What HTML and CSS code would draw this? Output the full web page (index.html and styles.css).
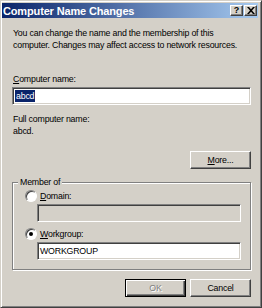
FILE: index.html
```html
<!DOCTYPE html>
<html>
<head>
<meta charset="utf-8">
<link rel="stylesheet" href="styles.css">
</head>
<body>
<div class="window">
  <div class="titlebar">
    <span class="title">Computer Name Changes</span>
    <div class="caption-buttons">
      <span class="cbtn help">?</span>
      <span class="cbtn close"><svg width="8" height="7" viewBox="0 0 8 7"><path d="M0 0h2l2 2.2L6 0h2L5 3.5 8 7H6L4 4.8 2 7H0l3-3.5z" fill="#000"/></svg></span>
    </div>
  </div>
  <div class="content">
    <p class="desc">You can change the name and the membership of this<br>computer. Changes may affect access to network resources.</p>
    <div class="label top-label"><u>C</u>omputer name:</div>
    <div class="field"><span class="sel">abcd</span></div>
    <div class="label full-label">Full computer name:</div>
    <div class="label">abcd.</div>
    <div class="more-row"><button class="btn"><u>M</u>ore...</button></div>
    <fieldset class="group">
      <legend>Member of</legend>
      <div class="group-body">
        <div class="radio-row">
          <span class="radio"></span><span class="rlabel"><u>D</u>omain:</span>
        </div>
        <div class="field indent disabled"></div>
        <div class="radio-row second">
          <span class="radio checked"></span><span class="rlabel"><u>W</u>orkgroup:</span>
        </div>
        <div class="field indent">WORKGROUP</div>
      </div>
    </fieldset>
    <div class="actions">
      <button class="btn default" disabled><span class="dis">OK</span></button>
      <button class="btn">Cancel</button>
    </div>
  </div>
</div>
</body>
</html>
```
FILE: styles.css
```css
html, body {
  margin: 0;
  padding: 0;
  background: #d4d0c8;
}
body {
  font-family: "Liberation Sans", Arial, sans-serif;
  font-size: 8.8px;
  letter-spacing: -0.2px;
  color: #000;
}
.window {
  width: 262px;
  height: 308px;
  box-sizing: border-box;
  background: #d4d0c8;
  border: 1px solid;
  border-color: #d4d0c8 #404040 #404040 #d4d0c8;
  box-shadow: inset 1px 1px #fff, inset -1px -1px #808080;
  padding: 2px 3px 3px 1px;
  display: flex;
  flex-direction: column;
}
.titlebar {
  height: 15px;
  flex: none;
  background: linear-gradient(to right, #0a246a, #a6caf0);
  display: flex;
  align-items: center;
  justify-content: space-between;
  padding: 0 1px 0 1px;
}
.title {
  color: #fff;
  font-weight: bold;
  font-size: 11px;
  letter-spacing: -0.15px;
}
.caption-buttons {
  display: flex;
  gap: 1px;
}
.cbtn {
  width: 13px;
  height: 11px;
  box-sizing: border-box;
  background: #d4d0c8;
  border: 1px solid;
  border-color: #fff #404040 #404040 #fff;
  box-shadow: inset -1px -1px #808080;
  display: flex;
  align-items: center;
  justify-content: center;
  font-weight: bold;
  font-size: 9px;
  letter-spacing: 0;
  line-height: 1;
}
.content {
  padding: 9px 7px 0 10px;
  display: flex;
  flex-direction: column;
}
.desc {
  margin: 0 0 0 1px;
  line-height: 12px;
  white-space: nowrap;
}
.label {
  line-height: 12px;
  padding-left: 1px;
  white-space: nowrap;
}
.top-label {
  margin-top: 22px;
  margin-bottom: 2px;
}
.field {
  height: 18px;
  box-sizing: border-box;
  background: #fff;
  border: 1px solid;
  border-color: #808080 #fff #fff #808080;
  box-shadow: inset 1px 1px #404040, inset -1px -1px #d4d0c8;
  padding: 2px 2px 0 2px;
  line-height: 12px;
}
.sel {
  background: #0a246a;
  color: #fff;
  display: inline-block;
  padding: 0 1px;
}
.full-label {
  margin-top: 8px;
}
.more-row {
  display: flex;
  justify-content: flex-end;
  margin-top: 14px;
}
.btn {
  width: 61px;
  height: 18px;
  box-sizing: border-box;
  background: #d4d0c8;
  border: 1px solid;
  border-color: #fff #404040 #404040 #fff;
  box-shadow: inset -1px -1px #808080;
  font-family: inherit;
  font-size: 8.8px;
  letter-spacing: -0.2px;
  color: #000;
  padding: 0;
  margin: 0;
}
.btn.default {
  border: 1px solid #000;
  box-shadow: inset 1px 1px #fff, inset -1px -1px #404040, inset -2px -2px #808080;
}
.dis {
  color: #808080;
  text-shadow: 1px 1px #fff;
}
.group {
  margin: 8px 0 0 0;
  height: 93px;
  box-sizing: border-box;
  border: 1px solid #808080;
  box-shadow: inset 1px 1px #fff, 1px 1px #fff;
  padding: 0;
  min-width: 0;
}
.group legend {
  padding: 0 2px;
  margin-left: 5px;
  line-height: 11px;
  background: #d4d0c8;
}
.group-body {
  padding: 0 11px 0 24px;
  display: flex;
  flex-direction: column;
}
.radio-row {
  display: flex;
  align-items: center;
  margin-left: -12px;
  height: 12px;
  margin-top: 2px;
  margin-bottom: 2px;
}
.radio-row.second {
  margin-top: 6px;
  margin-bottom: 2px;
}
.radio {
  width: 12px;
  height: 12px;
  box-sizing: border-box;
  border-radius: 50%;
  background: #fff;
  border: 1px solid;
  border-color: #808080 #fff #fff #808080;
  box-shadow: inset 1px 1px #404040;
  margin-right: 3px;
  position: relative;
}
.radio.checked::after {
  content: "";
  position: absolute;
  left: 3px;
  top: 3px;
  width: 4px;
  height: 4px;
  border-radius: 50%;
  background: #000;
}
.rlabel {
  line-height: 12px;
}
.field.indent {
  width: 204px;
}
.field.disabled {
  background: #d4d0c8;
}
.actions {
  display: flex;
  justify-content: flex-end;
  gap: 4px;
  margin-top: 9px;
}
```
